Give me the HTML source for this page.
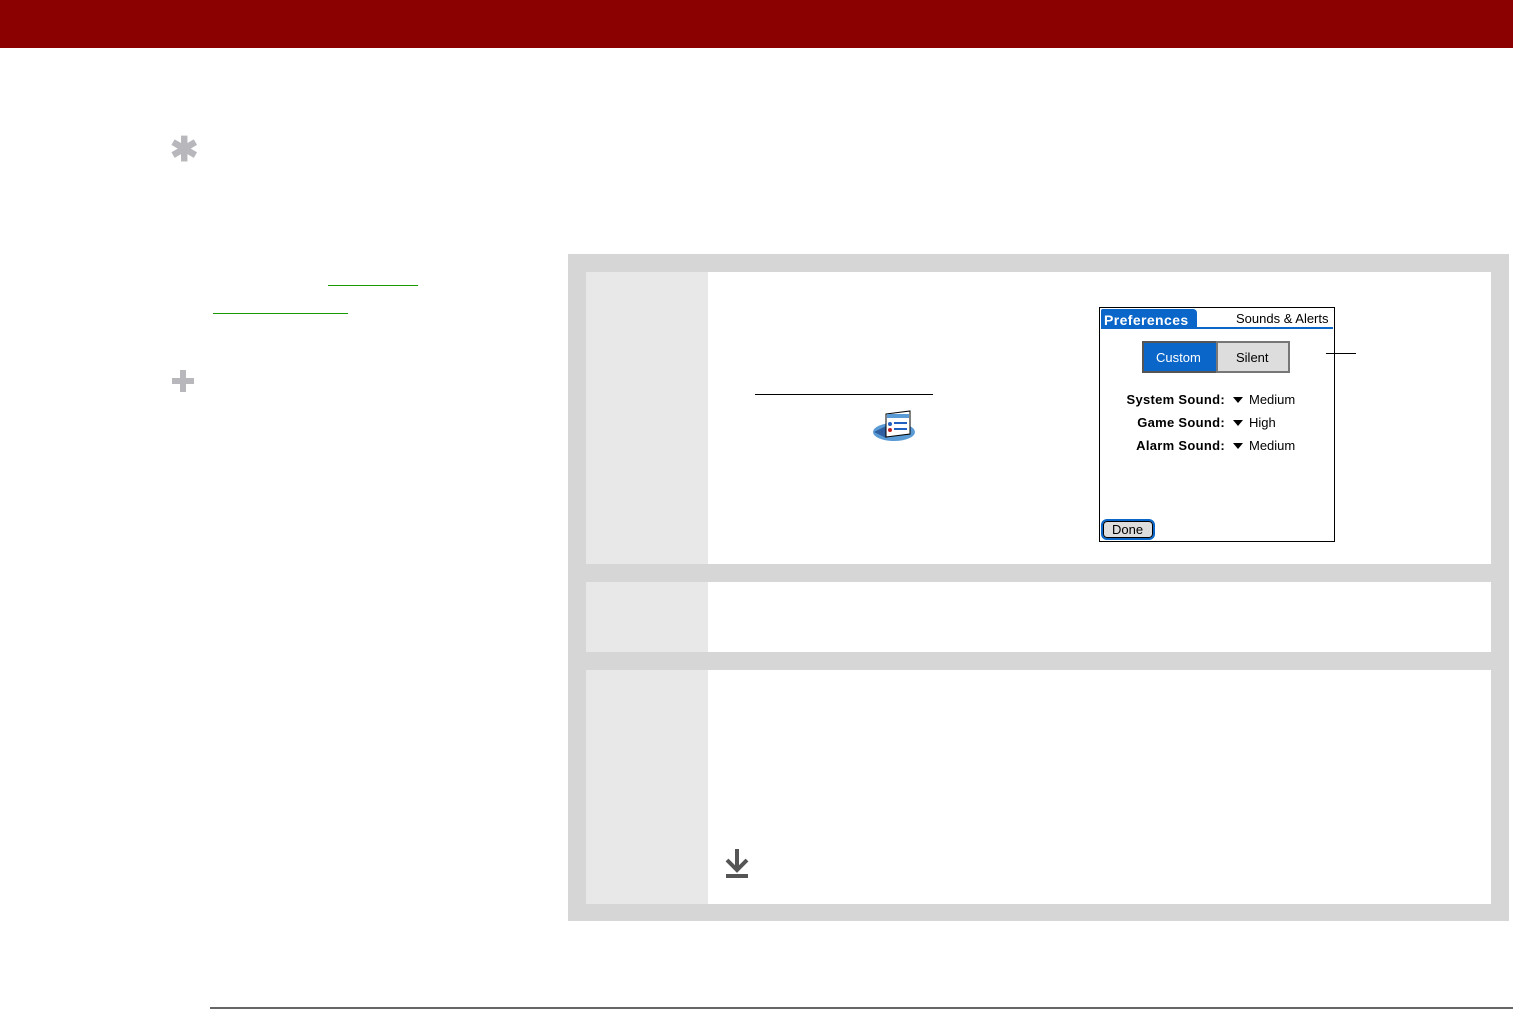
<!DOCTYPE html>
<html><head><meta charset="utf-8"><style>
*{margin:0;padding:0;box-sizing:border-box}
body{width:1513px;height:1010px;position:relative;background:#fff;font-family:"Liberation Sans",sans-serif;overflow:hidden}
.a{position:absolute}
.pf{font-family:"Liberation Sans",sans-serif;font-size:13px;color:#000;white-space:nowrap}
.lb{font-weight:bold;text-align:right;width:120px;left:1105px;letter-spacing:0.3px}
.tri{width:0;height:0;border-left:5px solid transparent;border-right:5px solid transparent;border-top:6px solid #000}
</style></head><body>
<div class="a" style="left:0;top:0;width:1513px;height:48px;background:#8b0000"></div>

<div class="a" style="left:170px;top:135px;font-size:34px;font-weight:bold;color:#b8b8bc;line-height:30px">✱</div>
<svg class="a" style="left:172px;top:370px" width="22" height="22"><rect x="8" y="0" width="6" height="22" fill="#b8b8bc"/><rect x="0" y="8" width="22" height="6" fill="#b8b8bc"/></svg>
<div class="a" style="left:328px;top:285px;width:90px;height:1px;background:#1a9a00"></div>
<div class="a" style="left:213px;top:313px;width:135px;height:1px;background:#1a9a00"></div>

<div class="a" style="left:568px;top:254px;width:941px;height:667px;background:#d6d6d6"></div>
<div class="a" style="left:586px;top:272px;width:122px;height:292px;background:#e8e8e8"></div>
<div class="a" style="left:708px;top:272px;width:783px;height:292px;background:#fff"></div>
<div class="a" style="left:586px;top:582px;width:122px;height:70px;background:#e8e8e8"></div>
<div class="a" style="left:708px;top:582px;width:783px;height:70px;background:#fff"></div>
<div class="a" style="left:586px;top:670px;width:122px;height:234px;background:#e8e8e8"></div>
<div class="a" style="left:708px;top:670px;width:783px;height:234px;background:#fff"></div>

<div class="a" style="left:755px;top:394px;width:178px;height:1px;background:#000"></div>
<svg class="a" style="left:872px;top:410px" width="44" height="32">
<ellipse cx="22" cy="22" rx="21" ry="9" fill="#5b9bd5"/>
<path d="M2 22 L14 16 L14 28 Z" fill="#2f5fa0"/>
<path d="M14 4 L38 1 L38 24 L14 27 Z" fill="#fff" stroke="#000" stroke-width="1"/>
<rect x="15" y="4" width="22" height="4" fill="#5b9bd5"/>
<circle cx="18" cy="14" r="2" fill="#2060c0"/><circle cx="18" cy="20" r="2" fill="#c02020"/>
<rect x="22" y="12" width="13" height="2" fill="#2060c0"/><rect x="22" y="18" width="13" height="2" fill="#2060c0"/>
</svg>

<div class="a" style="left:1099px;top:307px;width:236px;height:235px;border:1px solid #000;background:#fff"></div>
<div class="a" style="left:1101px;top:309px;width:96px;height:20px;background:#0a66c8;border-radius:2px 4px 0 0"></div>
<div class="a" style="left:1101px;top:327px;width:232px;height:2px;background:#0a66c8"></div>
<div class="a pf" style="left:1104px;top:312px;color:#fff;font-weight:bold;font-size:14px;letter-spacing:0.4px">Preferences</div>
<div class="a pf" style="left:1236px;top:311px;font-size:13px">Sounds &amp; Alerts</div>
<div class="a" style="left:1142px;top:341px;width:74px;height:32px;background:#0a66c8;border:2px solid #555;border-right:none"></div>
<div class="a" style="left:1216px;top:341px;width:74px;height:32px;background:#ddd;border:2px solid #777"></div>
<div class="a pf" style="left:1156px;top:350px;color:#fff">Custom</div>
<div class="a pf" style="left:1236px;top:350px">Silent</div>
<div class="a" style="left:1326px;top:353px;width:30px;height:1px;background:#000"></div>

<div class="a pf lb" style="top:392px">System Sound:</div>
<div class="a pf lb" style="top:415px">Game Sound:</div>
<div class="a pf lb" style="top:438px">Alarm Sound:</div>
<div class="a tri" style="left:1233px;top:397px"></div>
<div class="a tri" style="left:1233px;top:420px"></div>
<div class="a tri" style="left:1233px;top:443px"></div>
<div class="a pf" style="left:1249px;top:392px">Medium</div>
<div class="a pf" style="left:1249px;top:415px">High</div>
<div class="a pf" style="left:1249px;top:438px">Medium</div>
<div class="a" style="left:1101px;top:519px;width:54px;height:21px;border:2px solid #0a66c8;border-radius:6px;background:#ddd;box-shadow:0 0 0 1px #000 inset"></div>
<div class="a pf" style="left:1112px;top:522px">Done</div>

<svg class="a" style="left:724px;top:848px" width="26" height="32"><rect x="11" y="1" width="4" height="22" fill="#555"/><path d="M3 12 L13 22 L23 12" stroke="#555" stroke-width="4" fill="none"/><rect x="2" y="26" width="22" height="4" fill="#555"/></svg>

<div class="a" style="left:210px;top:1007px;width:1303px;height:2px;background:#666"></div>
</body></html>
